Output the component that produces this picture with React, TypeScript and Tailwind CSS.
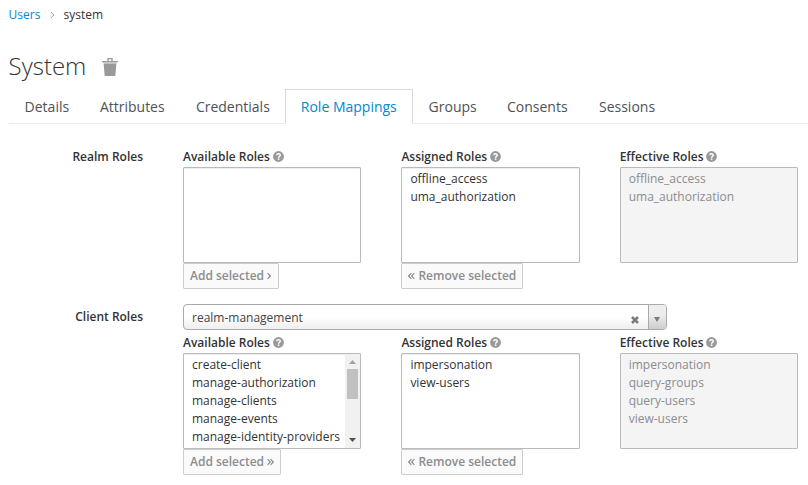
import React from "react";

function HelpIcon() {
  return (
    <svg className="ml-[2.8px] h-[11px] w-[11px] shrink-0" viewBox="0 0 11 11" aria-hidden="true">
      <circle cx="5.5" cy="5.5" r="5.4" fill="#999999" />
      <path d="M3.7 4.2 C3.8 2.2 7.3 2.2 7.3 4.1 C7.3 5.4 5.6 5.3 5.6 6.7" fill="none" stroke="#ffffff" strokeWidth="1.4" />
      <rect x="4.8" y="7.4" width="1.6" height="1.5" fill="#ffffff" />
    </svg>
  );
}

function Chevrons({ dir, double }: { dir: "left" | "right"; double?: boolean }) {
  const right = dir === "right";
  const w = double ? 7 : 4;
  return (
    <svg width={w} height="8" viewBox={`0 0 ${w} 8`} fill="none" stroke="#8b8d8f" strokeWidth="1.2" aria-hidden="true">
      <path d={right ? "M0.6 1.2 L3.3 4 L0.6 6.8" : "M3.4 1.2 L0.7 4 L3.4 6.8"} />
      {double && <path d={right ? "M3.6 1.2 L6.3 4 L3.6 6.8" : "M6.4 1.2 L3.7 4 L6.4 6.8"} />}
    </svg>
  );
}

function ScrollBar() {
  return (
    <div className="flex h-full w-[15px] shrink-0 flex-col items-center bg-[#f1f1f1]">
      <svg width="15" height="15" viewBox="0 0 15 15">
        <path d="M4 10 L7.5 6 L11 10 Z" fill="#a3a3a3" />
      </svg>
      <div className="h-[30px] w-[11px] bg-[#c1c1c1]" />
      <svg className="mt-auto" width="15" height="15" viewBox="0 0 15 15">
        <path d="M4 5 L11 5 L7.5 9 Z" fill="#505050" />
      </svg>
    </div>
  );
}

type ListProps = {
  title: string;
  items: string[];
  width: string;
  disabled?: boolean;
  scroll?: boolean;
  children?: React.ReactNode;
};

function RoleList({ title, items, width, disabled, scroll, children }: ListProps) {
  return (
    <div className={width}>
      <div className="flex h-[21px] items-center font-semibold text-[#333333]">
        <span>{title}</span>
        <HelpIcon />
      </div>
      <div
        className={
          "flex h-24 overflow-hidden rounded-[1px] border border-[#bababa] " +
          (disabled ? "bg-[#f4f4f4] text-[#8b8d8f]" : "bg-white text-[#333333] shadow-[inset_0_1px_1px_rgba(3,3,3,0.075)]")
        }
      >
        <ul className="min-w-0 grow pt-0.5 pl-2">
          {items.map((item) => (
            <li key={item} className="h-[18px] leading-[18px] whitespace-nowrap">
              {item}
            </li>
          ))}
        </ul>
        {scroll && <ScrollBar />}
      </div>
      {children}
    </div>
  );
}

function Button({ width, children }: { width: string; children: React.ReactNode }) {
  return (
    <button
      className={
        "flex h-[26px] items-center gap-[3px] rounded-[1px] border border-[#cdcdcd] bg-[#fafafa] pl-1.5 pb-px font-semibold whitespace-nowrap text-[#8b8d8f] " +
        width
      }
    >
      {children}
    </button>
  );
}

const tabs: { label: string; width: string }[] = [
  { label: "Details", width: "w-[75.3px]" },
  { label: "Attributes", width: "w-24" },
  { label: "Credentials", width: "w-[104.9px]" },
  { label: "Role Mappings", width: "w-[127.8px]" },
  { label: "Groups", width: "w-[78.4px]" },
  { label: "Consents", width: "w-[92px]" },
  { label: "Sessions", width: "w-[88px]" },
];

export default function App() {
  return (
    <div className="h-[485px] w-[808px] overflow-hidden bg-white pl-[8.6px] font-['Open_Sans',sans-serif] text-xs text-[#333333]">
      <nav className="flex h-[30px] items-center">
        <a className="w-[31px] text-[#0088ce]">Users</a>
        <svg className="ml-[10.4px] mr-[8.6px] h-2 w-[5px]" viewBox="0 0 5 8" fill="none" stroke="#9c9c9c">
          <path d="M0.8 1 L3.8 4 L0.8 7" />
        </svg>
        <span>system</span>
      </nav>
      <div className="flex h-[59px] items-center pt-[13px]">
        <h1 className="w-[93.4px] text-2xl font-light">System</h1>
        <svg className="mt-0.5 h-[18px] w-4" viewBox="0 0 16 18" fill="#999999">
          <path d="M5.3 3V0h5.4v3h5.1v1.5H0.2V3zM6.7 1.2V3h2.6V1.2z" fillRule="evenodd" />
          <path d="M1.4 4.5h13.2v1H1.4z" fill="#cccccc" />
          <path d="M1.6 5.5h12.8L13.3 18H2.7z" />
        </svg>
      </div>
      <div className="flex h-[35px] border-b border-[#ececec] text-sm text-[#4d5258]">
        {tabs.map((t) => (
          <div
            key={t.label}
            className={
              "h-[35px] shrink-0 border pl-[15px] leading-[33px] whitespace-nowrap " +
              t.width +
              (t.label === "Role Mappings" ? " border-[#d9d9d9] border-b-white bg-white text-[#0088ce]" : " border-transparent")
            }
          >
            {t.label}
          </div>
        ))}
      </div>

      <section className="mt-[22px] flex">
        <div className="mr-10 w-[134.4px] text-right leading-[21px] font-semibold">Realm Roles</div>
        <div className="flex">
          <RoleList title="Available Roles" items={[]} width="mr-[40.4px] w-[178px]">
            <Button width="w-24">
              Add selected <Chevrons dir="right" />
            </Button>
          </RoleList>
          <RoleList title="Assigned Roles" items={["offline_access", "uma_authorization"]} width="mr-[39.7px] w-[178.6px]">
            <Button width="w-[122px]">
              <Chevrons dir="left" double /> Remove selected
            </Button>
          </RoleList>
          <RoleList title="Effective Roles" items={["offline_access", "uma_authorization"]} width="w-[178.4px]" disabled />
        </div>
      </section>

      <section className="mt-[15px] flex">
        <div className="mr-10 w-[134.4px] pt-0.5 text-right leading-[21px] font-semibold">Client Roles</div>
        <div>
          <div className="mb-[2px] flex h-[26px] w-[484px] overflow-hidden rounded-[4px] border border-[#aaaaaa] bg-linear-to-t from-[#eeeeee] to-white to-50%">
            <span className="grow pl-2 leading-[25px] text-[#444444]">realm-management</span>
            <svg className="mt-[11px] mr-[9px] h-2 w-2" viewBox="0 0 8 8" stroke="#7c7c7c" strokeWidth="2.5">
              <path d="M1 1 L7 7 M7 1 L1 7" />
            </svg>
            <div className="flex w-[18px] justify-center border-l border-[#aaaaaa] bg-linear-to-t from-[#cccccc] to-[#eeeeee] to-60%">
              <svg className="mt-[11.5px] h-[5px] w-[6px]" viewBox="0 0 6 5" fill="#7c7c7c">
                <path d="M0 0h6L3 5z" />
              </svg>
            </div>
          </div>
          <div className="flex">
            <RoleList
              title="Available Roles"
              items={["create-client", "manage-authorization", "manage-clients", "manage-events", "manage-identity-providers"]}
              width="mr-[40.4px] w-[178px]"
              scroll
            >
              <Button width="w-[98px]">
                Add selected <Chevrons dir="right" double />
              </Button>
            </RoleList>
            <RoleList title="Assigned Roles" items={["impersonation", "view-users"]} width="mr-[39.7px] w-[178.6px]">
              <Button width="w-[122px]">
                <Chevrons dir="left" double /> Remove selected
              </Button>
            </RoleList>
            <RoleList
              title="Effective Roles"
              items={["impersonation", "query-groups", "query-users", "view-users"]}
              width="w-[178.4px]"
              disabled
            />
          </div>
        </div>
      </section>
    </div>
  );
}
